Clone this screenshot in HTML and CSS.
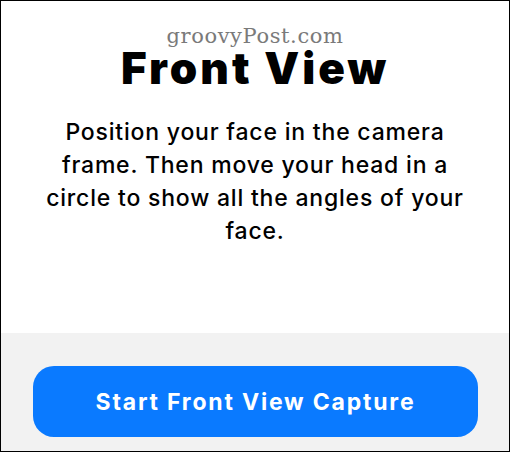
FILE: index.html
```html
<!doctype html>
<html lang="en">
<head>
    <meta charset="UTF-8">
    <title>Front View</title>
    <link rel="stylesheet" href="styles.css">
</head>
<body>
<div id="screen">
    <div class="content">
        <div class="watermark">groovyPost.com</div>
        <h1>Front View</h1>
        <p>Position your face in the camera frame. Then move your head in a circle to show all the angles of your face.</p>
    </div>
    <div class="footer">
        <button class="capture-btn">Start Front View Capture</button>
    </div>
</div>
</body>
</html>
```

FILE: styles.css
```css
body {
    margin: 0;
    font-family: Inter, "Noto Sans", sans-serif;
    background-color: #fff;
}

#screen {
    width: 510px;
    height: 452px;
    box-sizing: border-box;
    border: 1px solid #000;
    display: flex;
    flex-direction: column;
}

.content {
    height: 332px;
    background-color: #fff;
    text-align: center;
    padding-top: 23px;
    box-sizing: border-box;
}

.watermark {
    font-family: "DejaVu Serif", serif;
    font-size: 21px;
    line-height: 24px;
    letter-spacing: 0.6px;
    color: #7a7a7a;
}

h1 {
    margin: -3px 0 0;
    font-size: 44px;
    line-height: 46px;
    font-weight: 900;
    letter-spacing: 3px;
    color: #000;
}

p {
    margin: 25px auto 0;
    width: 440px;
    font-size: 23px;
    line-height: 33px;
    font-weight: 500;
    letter-spacing: 0.8px;
    color: #000;
}

.footer {
    flex: 1;
    background-color: #f2f2f2;
    padding: 33px 31px 0 32px;
}

.capture-btn {
    width: 100%;
    height: 71px;
    border: none;
    border-radius: 21px;
    background-color: #0a7aff;
    color: #fff;
    font-family: Inter, "Noto Sans", sans-serif;
    font-size: 23px;
    font-weight: 700;
    letter-spacing: 1.8px;
    cursor: pointer;
}
```
